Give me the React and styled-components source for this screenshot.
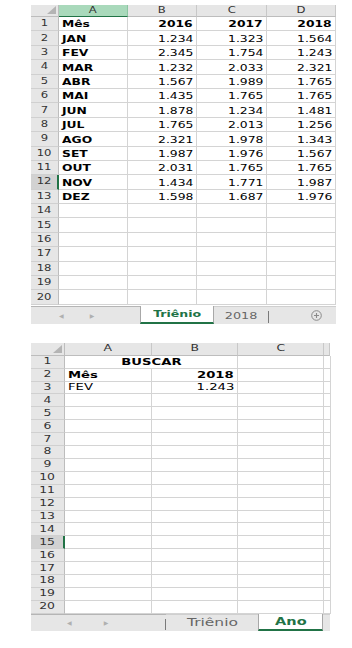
import React from 'react';
import styled, { createGlobalStyle } from 'styled-components';

const GREEN = '#217346';

const Global = createGlobalStyle`
  body { margin: 0; background: #fff; }
`;

const Page = styled.div`
  display: flex;
  flex-direction: column;
  align-items: flex-start;
  padding: 5px 0 0 31px;
  font-family: "DejaVu Sans", Verdana, sans-serif;
`;

const Book = styled.div`
  display: flex;
  flex-direction: column;
  margin-top: ${p => p.$top || 0}px;
`;

const Sheet = styled.div`
  display: grid;
  grid-template-columns: ${p => p.$cols};
  grid-template-rows: ${p => p.$head}px;
  grid-auto-rows: ${p => p.$row}px;
  font-size: 8.5px;
  color: #000;
`;

const Cell = styled.div`
  box-sizing: border-box;
  display: flex;
  align-items: flex-end;
  justify-content: ${p => (p.$align === 'right' ? 'flex-end' : p.$align === 'center' ? 'center' : 'flex-start')};
  padding: 0 3px 1px;
  border-right: 1px solid #d4d4d4;
  border-bottom: 1px solid #d4d4d4;
  white-space: nowrap;
  font-weight: ${p => (p.$bold ? 700 : 400)};
  grid-column: ${p => (p.$span ? `span ${p.$span}` : 'auto')};
`;

const ColHead = styled.div`
  box-sizing: border-box;
  display: flex;
  align-items: center;
  justify-content: center;
  background: ${p => (p.$sel ? '#a9d9bb' : '#e6e6e6')};
  border-right: 1px solid ${p => (p.$sel ? '#8cc5a2' : '#c8c8c8')};
  border-bottom: 1px solid ${p => (p.$sel ? GREEN : '#bdbdbd')};
  color: #333;
  font-size: 8px;
`;

const Corner = styled(ColHead)`
  justify-content: flex-end;
  align-items: flex-end;
  padding: 0 2px 2px 0;
  border-right: 1px solid #bdbdbd;
`;

const RowHead = styled.div`
  box-sizing: border-box;
  display: flex;
  align-items: center;
  justify-content: center;
  background: ${p => (p.$sel ? '#d2d2d2' : '#e6e6e6')};
  border-right: ${p => (p.$sel ? `2px solid ${GREEN}` : '1px solid #bdbdbd')};
  border-bottom: 1px solid #d0d0d0;
  color: #333;
  font-size: 8px;
`;

const Txt = styled.span`
  display: inline-block;
  transform: scaleX(${p => p.$sx || 1.45});
  transform-origin: ${p => p.$origin || 'center'};
`;

const TabBar = styled.div`
  display: flex;
  height: ${p => p.$h}px;
  margin-top: ${p => p.$gap || 0}px;
  background: #e6e6e6;
  font-size: ${p => p.$fs || 9.5}px;
`;

const Nav = styled.div`
  box-sizing: border-box;
  width: ${p => p.$w}px;
  display: flex;
  align-items: center;
  padding-left: ${p => p.$pad}px;
  gap: ${p => p.$gap}px;
  border-top: 1px solid #b5b5b5;
  position: relative;
  color: #b0b0b0;
  font-size: 6px;
`;

const Divider = styled.span`
  position: absolute;
  right: 0;
  top: 4px;
  bottom: 1px;
  width: 1px;
  background: #7a7a7a;
`;

const Tab = styled.div`
  box-sizing: border-box;
  width: ${p => p.$w}px;
  display: flex;
  align-items: center;
  justify-content: center;
  position: relative;
  background: ${p => (p.$active ? '#fff' : 'transparent')};
  border-left: ${p => (p.$active ? '1px solid #a8a8a8' : 'none')};
  border-right: ${p => (p.$active ? '1px solid #a8a8a8' : 'none')};
  border-bottom: ${p => (p.$active ? `2px solid ${GREEN}` : 'none')};
  border-top: ${p => (p.$active ? 'none' : '1px solid #cfcfcf')};
  color: ${p => (p.$active ? GREEN : '#666')};
  font-weight: ${p => (p.$active ? 700 : 400)};
`;

const Rest = styled.div`
  flex: 1;
  display: flex;
  align-items: center;
  justify-content: flex-end;
  padding-right: ${p => p.$pad || 0}px;
  border-top: 1px solid #cfcfcf;
`;

const topData = [
  ['JAN', '1.234', '1.323', '1.564'],
  ['FEV', '2.345', '1.754', '1.243'],
  ['MAR', '1.232', '2.033', '2.321'],
  ['ABR', '1.567', '1.989', '1.765'],
  ['MAI', '1.435', '1.765', '1.765'],
  ['JUN', '1.878', '1.234', '1.481'],
  ['JUL', '1.765', '2.013', '1.256'],
  ['AGO', '2.321', '1.978', '1.343'],
  ['SET', '1.987', '1.976', '1.567'],
  ['OUT', '2.031', '1.765', '1.765'],
  ['NOV', '1.434', '1.771', '1.987'],
  ['DEZ', '1.598', '1.687', '1.976'],
];

const CornerMark = () => (
  <svg width="9" height="8" viewBox="0 0 9 8">
    <polygon points="9,0 9,8 0,8" fill="#b4b4b4" />
  </svg>
);

const Plus = () => (
  <svg width="11" height="11" viewBox="0 0 11 11">
    <circle cx="5.5" cy="5.5" r="4.8" fill="none" stroke="#8a8a8a" strokeWidth="1" />
    <path d="M5.5 3v5M3 5.5h5" stroke="#8a8a8a" strokeWidth="1.1" />
  </svg>
);

const T = ({ children, o = 'center', sx }) => (
  <Txt $origin={o} $sx={sx}>{children}</Txt>
);

function TopSheet() {
  const rows = [];
  for (let r = 1; r <= 20; r++) {
    const cells = [];
    if (r === 1) {
      cells.push(<Cell key="a" $bold><T o="left">Mês</T></Cell>);
      ['2016', '2017', '2018'].forEach(y =>
        cells.push(<Cell key={y} $bold $align="right"><T o="right">{y}</T></Cell>)
      );
    } else if (r <= 13) {
      const d = topData[r - 2];
      cells.push(<Cell key="a" $bold><T o="left">{d[0]}</T></Cell>);
      d.slice(1).forEach((v, i) =>
        cells.push(<Cell key={i} $align="right"><T o="right">{v}</T></Cell>)
      );
    } else {
      for (let i = 0; i < 4; i++) cells.push(<Cell key={i} />);
    }
    rows.push(
      <React.Fragment key={r}>
        <RowHead $sel={r === 12}><T>{r}</T></RowHead>
        {cells}
      </React.Fragment>
    );
  }
  return (
    <Book>
      <Sheet $cols="28px 69px 69px 70px 69px" $head={12} $row={14.4}>
        <Corner><CornerMark /></Corner>
        <ColHead $sel><T>A</T></ColHead>
        <ColHead><T>B</T></ColHead>
        <ColHead><T>C</T></ColHead>
        <ColHead><T>D</T></ColHead>
        {rows}
      </Sheet>
      <TabBar $h={18} $gap={1}>
        <Nav $w={109} $pad={28} $gap={26}>
          <span>◀</span>
          <span>▶</span>
        </Nav>
        <Tab $w={74} $active><T sx={1.32}>Triênio</T></Tab>
        <Tab $w={55}>
          <T sx={1.35}>2018</T>
          <Divider />
        </Tab>
        <Rest $pad={14}><Plus /></Rest>
      </TabBar>
    </Book>
  );
}

function BottomSheet() {
  const rows = [];
  for (let r = 1; r <= 20; r++) {
    let cells;
    if (r === 1) {
      cells = [
        <Cell key="m" $span={2} $bold $align="center"><T sx={1.55}>BUSCAR</T></Cell>,
        <Cell key="c" />,
        <Cell key="d" />,
      ];
    } else if (r === 2) {
      cells = [
        <Cell key="a" $bold><T o="left" sx={1.55}>Mês</T></Cell>,
        <Cell key="b" $bold $align="right"><T o="right" sx={1.55}>2018</T></Cell>,
        <Cell key="c" />,
        <Cell key="d" />,
      ];
    } else if (r === 3) {
      cells = [
        <Cell key="a"><T o="left" sx={1.55}>FEV</T></Cell>,
        <Cell key="b" $align="right"><T o="right" sx={1.55}>1.243</T></Cell>,
        <Cell key="c" />,
        <Cell key="d" />,
      ];
    } else {
      cells = [0, 1, 2, 3].map(i => <Cell key={i} />);
    }
    rows.push(
      <React.Fragment key={r}>
        <RowHead $sel={r === 15}><T sx={1.55}>{r}</T></RowHead>
        {cells}
      </React.Fragment>
    );
  }
  return (
    <Book $top={19}>
      <Sheet $cols="34px 87px 86px 86px 6px" $head={13} $row={12.9}>
        <Corner><CornerMark /></Corner>
        <ColHead><T sx={1.55}>A</T></ColHead>
        <ColHead><T sx={1.55}>B</T></ColHead>
        <ColHead><T sx={1.55}>C</T></ColHead>
        <ColHead />
        {rows}
      </Sheet>
      <TabBar $h={17} $fs={10}>
        <Nav $w={135} $pad={36} $gap={32}>
          <span>◀</span>
          <span>▶</span>
          <Divider />
        </Nav>
        <Tab $w={92}><T sx={1.55}>Triênio</T></Tab>
        <Tab $w={65} $active><T sx={1.45}>Ano</T></Tab>
        <Rest />
      </TabBar>
    </Book>
  );
}

export default function App() {
  return (
    <>
      <Global />
      <Page>
        <TopSheet />
        <BottomSheet />
      </Page>
    </>
  );
}
